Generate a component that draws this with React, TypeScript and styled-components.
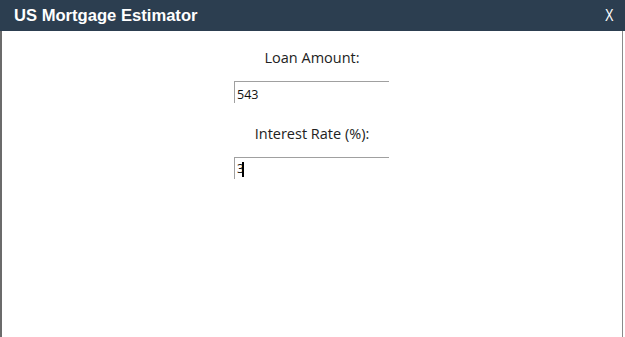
import React from "react"
import styled, { createGlobalStyle } from "styled-components"

const Global = createGlobalStyle`
  html, body {
    margin: 0;
    padding: 0;
    background: #ffffff;
  }
  body {
    font-family: "Open Sans", "Noto Sans", sans-serif;
  }
`

const Window = styled.div`
  width: 625px;
  height: 337px;
  display: flex;
  flex-direction: column;
  overflow: hidden;
`

const TitleBar = styled.div`
  height: 31px;
  flex: none;
  background: #2c3e50;
  display: flex;
  align-items: center;
  justify-content: space-between;
  padding: 0 10px 0 14px;
  color: #ffffff;
  font-family: "Liberation Sans", Arial, sans-serif;
`

const Title = styled.span`
  font-size: 16.6px;
  font-weight: bold;
`

const Close = styled.span`
  font-size: 16px;
  font-weight: normal;
  transform: scaleX(0.8);
  cursor: pointer;
`

const Body = styled.div`
  flex: 1;
  display: flex;
  flex-direction: column;
  align-items: center;
  border-left: 2px solid #6b6b6b;
  border-right: 1px solid #8a8a8a;
  margin-right: 2px;
  padding-top: 17px;
`

const Field = styled.div`
  display: flex;
  flex-direction: column;
  align-items: center;
  margin-bottom: 21px;
`

const Label = styled.label`
  font-size: 14.5px;
  color: #222222;
  line-height: 20px;
  margin-bottom: 13px;
`

const Input = styled.input`
  box-sizing: border-box;
  width: 155px;
  height: 22px;
  margin-left: -1px;
  border: none;
  border-top: 1px solid #a0a0a0;
  border-left: 1px solid #a0a0a0;
  padding: 3px 2px 0;
  font-family: "Open Sans", "Noto Sans", sans-serif;
  font-size: 12.5px;
  color: #111111;
  outline: none;
  background: #ffffff;
`

const CaretValue = styled.div`
  box-sizing: border-box;
  width: 155px;
  height: 22px;
  margin-left: -1px;
  border-top: 1px solid #a0a0a0;
  border-left: 1px solid #a0a0a0;
  padding: 2px 2px 0;
  font-size: 12.5px;
  line-height: 18px;
  color: #111111;
  display: flex;
  align-items: flex-start;
`

const Caret = styled.span`
  display: inline-block;
  width: 2px;
  height: 15px;
  margin-top: 2px;
  margin-left: -2px;
  background: #000000;
`

export default function App() {
  return (
    <>
      <Global />
      <Window>
        <TitleBar>
          <Title>US Mortgage Estimator</Title>
          <Close>X</Close>
        </TitleBar>
        <Body>
          <Field>
            <Label>Loan Amount:</Label>
            <Input defaultValue="543" />
          </Field>
          <Field>
            <Label>Interest Rate (%):</Label>
            <CaretValue>
              3<Caret />
            </CaretValue>
          </Field>
        </Body>
      </Window>
    </>
  )
}
